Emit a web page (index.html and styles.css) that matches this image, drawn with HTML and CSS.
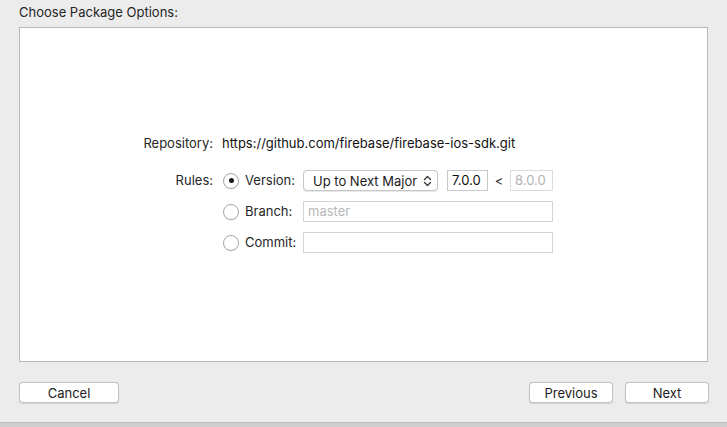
FILE: index.html
```html
<!DOCTYPE html>
<html>
<head>
<meta charset="utf-8">
<link rel="stylesheet" href="styles.css">
</head>
<body>
<div class="window">
  <div class="title">Choose Package Options:</div>
  <div class="panel">
    <div class="form">
      <div class="label">Repository:</div>
      <div class="value">https://github.com/firebase/firebase-ios-sdk.git</div>
      <div class="label rules-label">Rules:</div>
      <div class="rules">
        <span class="radio on"></span>
        <span class="rlabel">Version:</span>
        <div class="line">
          <div class="popup"><span>Up to Next Major</span>
            <svg class="chev" width="9" height="12" viewBox="0 0 9 12"><path d="M1.5 4.5 L4.5 1.5 L7.5 4.5 M1.5 7.5 L4.5 10.5 L7.5 7.5" fill="none" stroke="#333" stroke-width="1.3" stroke-linecap="round" stroke-linejoin="round"/></svg>
          </div>
          <div class="field small">7.0.0</div>
          <span class="lt">&lt;</span>
          <div class="field small disabled">8.0.0</div>
        </div>
        <span class="radio"></span>
        <span class="rlabel">Branch:</span>
        <div class="field wide"><span class="ph">master</span></div>
        <span class="radio"></span>
        <span class="rlabel">Commit:</span>
        <div class="field wide"></div>
      </div>
    </div>
  </div>
  <div class="footer">
    <button class="btn cancel">Cancel</button>
    <div class="right">
      <button class="btn nav">Previous</button>
      <button class="btn nav">Next</button>
    </div>
  </div>
</div>
<div class="bottom"></div>
</body>
</html>
```
FILE: styles.css
```css
html, body {
  margin: 0;
  padding: 0;
}
body {
  width: 727px;
  height: 427px;
  background: #ececec;
  font-family: Inter, "Noto Sans", sans-serif;
  font-size: 13px;
  color: #242424;
  overflow: hidden;
}
.window {
  height: 422px;
  display: flex;
  flex-direction: column;
  background: #ececec;
}
.title {
  height: 27px;
  padding-left: 19px;
  line-height: 24px;
  color: #262626;
}
.panel {
  margin: 0 19px;
  height: 335px;
  background: #fff;
  border: 1px solid #b9b9b9;
  padding-top: 105px;
  box-sizing: border-box;
}
.form {
  display: grid;
  grid-template-columns: 193px auto;
  column-gap: 9px;
  row-gap: 16px;
  align-items: start;
}
.label {
  text-align: right;
  line-height: 21px;
  color: #262626;
}
.value {
  line-height: 21px;
  color: #111;
}
.rules {
  display: grid;
  grid-template-columns: 16px 51px auto;
  column-gap: 7px;
  row-gap: 10px;
  align-items: center;
}
.radio {
  width: 14px;
  height: 14px;
  margin-left: 1px;
  border: 1px solid #a8a8a8;
  border-radius: 50%;
  background: #fff;
  position: relative;
  box-shadow: 0 0.5px 1px rgba(0,0,0,0.08);
}
.radio.on::after {
  content: "";
  position: absolute;
  left: 4.5px;
  top: 4.5px;
  width: 5px;
  height: 5px;
  border-radius: 50%;
  background: #1a1a1a;
}
.rlabel {
  line-height: 21px;
  color: #262626;
}
.line {
  display: flex;
  align-items: center;
}
.popup {
  width: 119px;
  height: 19px;
  border: 1px solid #c6c6c6;
  border-radius: 4px;
  background: #fff;
  display: flex;
  align-items: center;
  justify-content: space-between;
  padding: 0 5px 0 9px;
  box-sizing: content-box;
  box-shadow: 0 0.5px 1px rgba(0,0,0,0.1);
  color: #1c1c1c;
}
.chev {
  display: block;
}
.field {
  height: 19px;
  border: 1px solid #c9c9c9;
  background: #fff;
  line-height: 19px;
  padding-left: 4px;
  box-sizing: content-box;
  color: #111;
}
.field.small {
  width: 35px;
  margin-left: 9px;
}
.field.small.disabled {
  width: 37px;
  margin-left: 0;
  color: #b3b3b3;
  border-color: #dcdcdc;
}
.lt {
  width: 22px;
  text-align: center;
  color: #262626;
}
.field.wide {
  width: 244px;
  border-color: #d4d4d4;
}
.ph {
  color: #b8b8b8;
}
.footer {
  display: flex;
  justify-content: space-between;
  padding: 20px 18px 0 19px;
}
.right {
  display: flex;
  gap: 12px;
}
.btn {
  height: 21px;
  border: 1px solid #c3c3c3;
  border-radius: 4px;
  background: #fff;
  font-family: inherit;
  font-size: 13px;
  color: #1c1c1c;
  padding: 0;
  box-shadow: 0 0.5px 1px rgba(0,0,0,0.12);
}
.cancel {
  width: 100px;
}
.nav {
  width: 84px;
}
.bottom {
  height: 5px;
  background: #cfcfcf;
  border-top: 1px solid #bdbdbd;
  box-sizing: border-box;
}
```
